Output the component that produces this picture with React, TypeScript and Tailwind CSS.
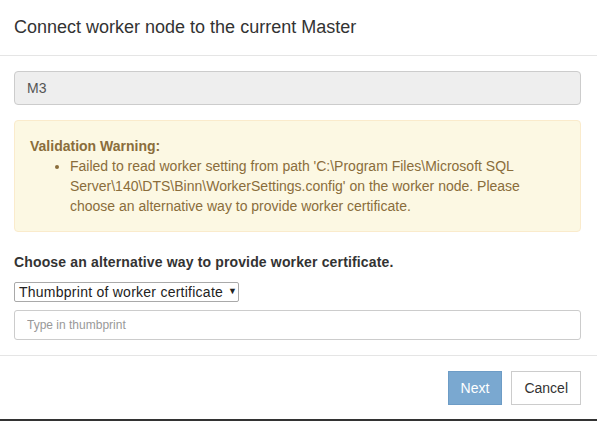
import { useState } from 'react';

const App = () => {
  const [thumbprint, setThumbprint] = useState('');

  return (
    <div className="w-[597px] h-[421px] overflow-hidden bg-white text-[#333] font-['Liberation_Sans',Arial,sans-serif]">
      <div className="border-b-2 border-[#333]">
        {/* header */}
        <div className="pl-[14px] pr-[16px] pt-[15px] pb-[15px] border-b border-[#e5e5e5]">
          <h4 className="text-[18px] leading-[25px] text-[#333]">Connect worker node to the current Master</h4>
        </div>

        {/* body */}
        <div className="pl-[14px] pr-[16px] pt-[15px] pb-[15px]">
          <div className="h-[34px] flex items-center px-[12px] bg-[#eee] border border-[#ccc] rounded-[4px] text-[14px] text-[#555]">
            M3
          </div>

          <div className="mt-[15px] p-[15px] bg-[#fcf8e3] border border-[#faebcc] rounded-[4px] text-[#8a6d3b] text-[14px] leading-[20px]">
            <div className="font-bold">Validation Warning:</div>
            <ul className="list-disc pl-[40px]">
              <li>
                Failed to read worker setting from path 'C:\Program Files\Microsoft SQL Server\140\DTS\Binn\WorkerSettings.config' on the worker node. Please choose an alternative way to provide worker certificate.
              </li>
            </ul>
          </div>

          <div className="mt-[20px] text-[14px] tracking-[0.15px] leading-[20px] font-bold text-[#333]">
            Choose an alternative way to provide worker certificate.
          </div>

          <div className="mt-[10px] w-[225px] h-[20px] flex items-center gap-[5px] pl-[4px] border border-[#a9a9a9] rounded-[2px] text-[14px] tracking-[0.25px] text-[#222] whitespace-nowrap">
            <span>Thumbprint of worker certificate</span>
            <span className="text-[9px]">▼</span>
          </div>

          <input
            value={thumbprint}
            onChange={(e) => setThumbprint(e.target.value)}
            placeholder="Type in thumbprint"
            className="mt-[8px] block w-full h-[30px] px-[12px] border border-[#ccc] rounded-[3px] text-[12px] placeholder:text-[#999] outline-none"
          />
        </div>

        {/* footer */}
        <div className="pl-[14px] pr-[16px] pt-[15px] pb-[14px] border-t border-[#e5e5e5] flex justify-end gap-[9px]">
          <button
            disabled
            className="h-[34px] px-[12px] bg-[#7aa8d0] border border-[#6d9cc6] text-white text-[14px]"
          >
            Next
          </button>
          <button className="h-[34px] px-[12px] bg-white border border-[#ccc] text-[#333] text-[14px]">
            Cancel
          </button>
        </div>
      </div>
    </div>
  );
};

export default App;
